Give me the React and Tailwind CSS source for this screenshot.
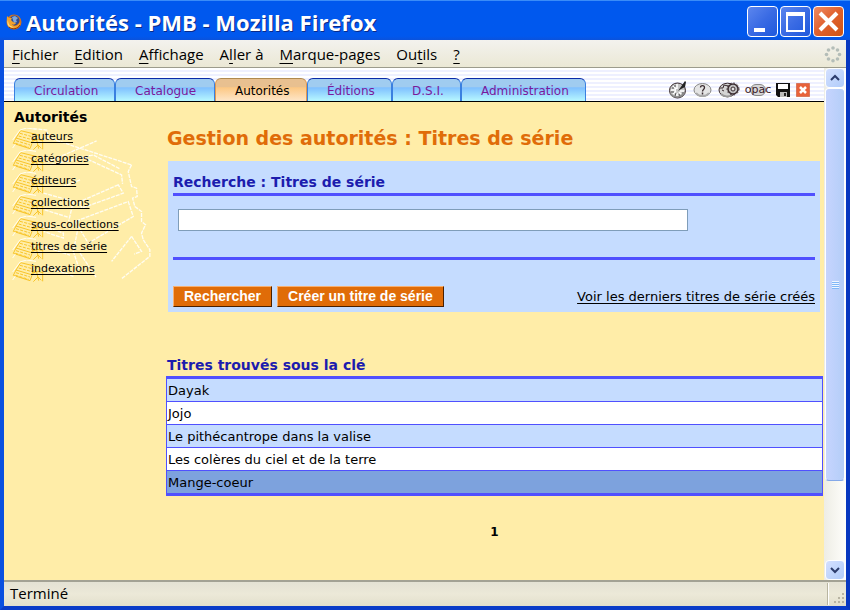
import React from "react";

const VERDANA = "font-['DejaVu_Sans',sans-serif]";
const TAHOMA = "font-['Open_Sans',sans-serif]";

const menus = [
  ["", "F", "ichier"],
  ["", "E", "dition"],
  ["", "A", "ffichage"],
  ["A", "l", "ler à"],
  ["", "M", "arque-pages"],
  ["Ou", "t", "ils"],
  ["", "?", ""],
];

const tabs = [
  { label: "Circulation", width: "w-[101px]" },
  { label: "Catalogue", width: "w-[100px]" },
  { label: "Autorités", width: "w-[92px]", active: true },
  { label: "Éditions", width: "w-[85px]" },
  { label: "D.S.I.", width: "w-[69px]" },
  { label: "Administration", width: "w-[125px]" },
];

const links = ["auteurs", "catégories", "éditeurs", "collections", "sous-collections", "titres de série", "indexations"];

const results = [
  { title: "Dayak", bg: "bg-[#c5dcff]" },
  { title: "Jojo", bg: "bg-white" },
  { title: "Le pithécantrope dans la valise", bg: "bg-[#c5dcff]" },
  { title: "Les colères du ciel et de la terre", bg: "bg-white" },
  { title: "Mange-coeur", bg: "bg-[#7da2dd]" },
];

function FirefoxLogo() {
  return (
    <svg width="16" height="16" viewBox="0 0 16 16" aria-hidden="true">
      <circle cx="8" cy="8" r="7.5" fill="#d8741a" />
      <circle cx="8.5" cy="6.5" r="5" fill="#2c4a94" />
      <path d="M6 3l3-1 3 2-2 2 1 2-3 1-1-3z" fill="#7fa8dc" />
      <path d="M1 2l2 2 3 0-1 2 2 2 3 1c-1 2-3 2-4 1 1 3 6 3 8-2 1 4-3 7-6 7C3 15 0 12 1 2z" fill="#f2a22c" />
      <path d="M2 6c0 5 3 7 6 7-4 2-8-2-6-7z" fill="#fbe08a" />
      <path d="M3 13c3 3 9 2 11-2" stroke="#8a3208" fill="none" />
    </svg>
  );
}

function WindowButton({ label, close, children }) {
  return (
    <button
      type="button"
      aria-label={label}
      className={`size-[31px] rounded border border-white flex items-center justify-center ${
        close
          ? "bg-linear-to-br from-[#ee8a62] via-[#e0602c] to-[#cf5410]"
          : "bg-linear-to-br from-[#5c86ee] via-[#3a6be4] to-[#1d58dc]"
      }`}
    >
      <svg width="27" height="27" viewBox="0 0 27 27" fill="none" stroke="#fff" aria-hidden="true">
        {children}
      </svg>
    </button>
  );
}

function TitleBar() {
  return (
    <header className="h-10 shrink-0 flex items-center gap-1 px-1.5 pt-0.5 bg-linear-to-b from-[#0058ee] from-0% via-[#0058ee] via-90% to-[#0a52dc] border-t border-[#3a8cf8]">
      <FirefoxLogo />
      <h1 className="grow text-[22px] leading-7 font-bold text-white whitespace-nowrap font-['Open_Sans',sans-serif] [text-shadow:1px_1px_0_#0a2a88]">
        Autorités - PMB - Mozilla Firefox
      </h1>
      <div className="flex gap-0.5">
        <WindowButton label="Réduire">
          <path d="M5 22h11" strokeWidth="4" />
        </WindowButton>
        <WindowButton label="Agrandir">
          <path d="M5 6v17h17V6" strokeWidth="2" />
          <path d="M4 6h19" strokeWidth="4" />
        </WindowButton>
        <WindowButton label="Fermer" close>
          <path d="M5 5l17 17M22 5L5 22" strokeWidth="4" />
        </WindowButton>
      </div>
    </header>
  );
}

function MenuBar() {
  return (
    <nav className={`h-7 shrink-0 flex items-center pl-2 pr-1 bg-linear-to-b from-[#f3f2ee] to-[#ebe8d5] border-b border-[#9c9b8c] ${TAHOMA}`}>
      <div className="grow flex gap-4 text-[15px] leading-6 text-black">
        {menus.map(([before, key, after]) => (
          <button type="button" key={before + key + after} className="whitespace-pre">
            {before}
            <span className="underline underline-offset-3">{key}</span>
            {after}
          </button>
        ))}
      </div>
      <svg width="18" height="18" viewBox="0 0 18 18" fill="#b4bdb8" aria-hidden="true">
        <circle cx="9" cy="3" r="1.800" />
        <circle cx="13.500" cy="5" r="1.800" />
        <circle cx="15.500" cy="9.500" r="1.800" />
        <circle cx="13.500" cy="14" r="1.800" />
        <circle cx="9" cy="15.800" r="1.800" />
        <circle cx="4.500" cy="14" r="1.800" />
        <circle cx="2.500" cy="9.500" r="1.800" />
        <circle cx="4.500" cy="5" r="1.800" />
      </svg>
    </nav>
  );
}

function ToolIcon({ label, width, children }) {
  return (
    <button type="button" aria-label={label}>
      <svg width={width} height="18" viewBox={`0 0 ${width} 18`} fill="none" stroke="#3a2c30" aria-hidden="true">
        {children}
      </svg>
    </button>
  );
}

function Toolbar() {
  return (
    <div className="flex items-center gap-1.5 pr-3.5 pb-0.5">
      <ToolIcon label="Raccourcis" width={19}>
        <ellipse cx="9.500" cy="9.500" rx="8" ry="7.500" fill="#c4c4c4" />
        <path d="M2.500 13c3 4 10 4 13 0" stroke="#888" strokeWidth="1.500" />
        <path d="M9 3v5M3 9h5M12 10h4M9 12v3M5 5l3 3M5 13l3-3M13 13l-2-2" stroke="#fff" strokeWidth="1.500" />
        <path d="M7 4v2M4 7h2M3 11h3M7 15l1-3M12 15l-1-2M14 12h2" stroke="#555" />
        <path d="M10 10l7-10 1 1-1 5-4 2z" fill="#222" stroke="none" />
      </ToolIcon>
      <ToolIcon label="Aide" width={19}>
        <ellipse cx="9.500" cy="9" rx="8.500" ry="6.500" fill="#e4e4e4" stroke="#888" />
        <path d="M3 12c3 4 10 4 13 0" stroke="#aaa" strokeWidth="2" />
        <path d="M7.500 6.500c0-2.500 4-2.500 4 0 0 2-2 2-2 4" strokeWidth="1.300" />
        <path d="M9.500 11.500v2" strokeWidth="1.500" />
      </ToolIcon>
      <ToolIcon label="Préférences" width={22}>
        <ellipse cx="9.500" cy="9" rx="8.500" ry="6.800" fill="#d4d4d4" />
        <path d="M3 13c3 3 8 3 11 1" stroke="#999" strokeWidth="2" />
        <path d="M2 7h3l1-3 4 1M4 9l2 1" />
        <circle cx="15" cy="8" r="5" fill="#c0c0c0" strokeWidth="1.500" />
        <circle cx="15" cy="8" r="6" stroke="#3a2c30" strokeDasharray="1.500 2" />
        <circle cx="15" cy="8" r="2" fill="#e4e4e4" />
      </ToolIcon>
      <button type="button" className="relative w-6 h-4 flex items-center justify-center text-[11px] leading-4 text-[#3a1c28] font-['DejaVu_Sans',sans-serif]">
        <span className="absolute inset-x-1 inset-y-0.5 rounded-full border border-[#888] bg-[#d6d6d6]" />
        <span className="relative">opac</span>
      </button>
      <ToolIcon label="Sauvegarde" width={14}>
        <path d="M0 2h14v14H2l-2-2z" fill="#111" stroke="none" />
        <path d="M2 3h10v5H2z" fill="#fff" stroke="none" />
        <path d="M4 11h7v5H4z" fill="#bbb" stroke="none" />
        <path d="M8 12h2v3H8z" fill="#222" stroke="none" />
      </ToolIcon>
      <ToolIcon label="Quitter" width={14}>
        <path d="M.5 2.500h13v13H.5z" fill="#e8623a" stroke="#c0401c" strokeDasharray="1 1" />
        <path d="M4 6l6 6M10 6l-6 6" stroke="#fff" strokeWidth="2.500" />
      </ToolIcon>
    </div>
  );
}

function TabBar() {
  return (
    <div className="h-[34px] shrink-0 flex items-end pl-2.5 border-b border-black bg-[repeating-linear-gradient(to_bottom,#fff_0px,#fff_2px,#eef0ff_2px,#eef0ff_4px)]">
      <nav className={`grow flex text-xs ${VERDANA}`}>
        {tabs.map((tab) => (
          <a
            key={tab.label}
            href="#"
            className={`${tab.width} h-[23px] pl-[19px] pt-1 leading-4 rounded-t-md border-t border-x whitespace-nowrap ${
              tab.active
                ? "text-black border-t-[#b08a50] border-x-[#e09a50] bg-linear-to-b from-[#e8c090] from-35% via-[#fcc884] via-40% to-[#fde6c8]"
                : "text-[#7a1a9a] border-t-[#0c2ca8] border-x-[#3a80e0] bg-linear-to-b from-[#a0ccf0] from-35% via-[#80c0ff] via-40% to-[#b8f8ff]"
            }`}
          >
            {tab.label}
          </a>
        ))}
      </nav>
      <Toolbar />
    </div>
  );
}

function BookPile() {
  return (
    <svg width="32" height="22" viewBox="36 82 96 66" fill="none" strokeWidth="3" aria-hidden="true">
      <path d="M62 90l58 14M62 90l-14 22 46 14 8-14M48 112l-8 16 50 16 6-16M112 104l-12 16" stroke="#f8c428" />
      <path d="M60 98l40 11M56 106l40 11M48 120l42 13M46 128l40 12" stroke="#f8c428" strokeDasharray="9 4" />
      <path d="M98 122l14-6 18 4M110 118l6 26M128 122v24M100 147l14-14 10 10" stroke="#f8c428" />
      <path d="M38 118l22-30 20-6 28 4M38 142l8-12" stroke="#fffdf2" />
    </svg>
  );
}

function Sidebar() {
  return (
    <aside className={`w-[162px] shrink-0 pl-2.5 pt-[7px] text-black ${VERDANA}`}>
      <h2 className="text-sm leading-[17px] font-bold">Autorités</h2>
      <div className="relative">
        <svg
          className="absolute -left-0.5 top-0"
          width="140"
          height="153"
          viewBox="36 78 420 460"
          fill="none"
          stroke="#fffdf2"
          strokeWidth="4"
          strokeDasharray="12 3"
          aria-hidden="true"
        >
          <path d="M100 86l40 4 4 20M140 112l255 83M250 172l115 53 3 27M145 185l145-62M150 195l130-30 80 42" />
          <path d="M395 195l-10 20 10 45 15 5 2 25-14 5 7 25 20 15v30l12 10-12 25 5 20 20 30v20l-85 67" />
          <path d="M355 255l-115 50 5 20 125-45zM240 240l-50 20M385 305l15 45-135 80-40-65z" />
          <path d="M395 410l30 45-22 8M395 410l-60 75M240 460l50 75M232 395l-12 60 20 60M130 380l60 20v15l-60-20" />
          <path d="M130 280l90 24-14 60M134 330l70 22M130 440l80 26M140 500l80 30" />
        </svg>
        <ul>
          {links.map((link) => (
            <li key={link} className="relative h-[22px]">
              <span className="absolute -left-0.5 top-0.5">
                <BookPile />
              </span>
              <a href="#" className="relative block pl-[17px] text-[11px] leading-[22px] underline underline-offset-2">
                {link}
              </a>
            </li>
          ))}
        </ul>
      </div>
    </aside>
  );
}

const ACTION =
  "h-[21px] px-2.5 bg-[#e06c08] border border-t-[#f8b070] border-l-[#f8b070] border-r-[#4a2000] border-b-[#4a2000] text-sm leading-[19px] font-bold text-white font-['Liberation_Sans',sans-serif]";

function SearchForm() {
  return (
    <form className="mr-[3px] ml-0.5 px-[5px] pt-2.5 pb-[5px] bg-[#c5dcff]" onSubmit={(e) => e.preventDefault()}>
      <label htmlFor="titre" className="block h-[25px] text-sm leading-[22px] font-bold text-[#1c1cae] border-b-3 border-[#5050ff]">
        Recherche : Titres de série
      </label>
      <div className="h-16 pl-[5px] pt-[13px] border-b-3 border-[#5050ff]">
        <input id="titre" type="text" className="block w-4/5 h-[22px] px-1 text-[13px] bg-white border border-[#7f9db9] outline-none" />
      </div>
      <div className="mt-[26px] flex items-center gap-[5px]">
        <button type="submit" className={ACTION}>
          Rechercher
        </button>
        <button type="button" className={ACTION}>
          Créer un titre de série
        </button>
        <a href="#" className="ml-auto text-[13px] leading-5 text-black underline underline-offset-2">
          Voir les derniers titres de série créés
        </a>
      </div>
    </form>
  );
}

function Results() {
  return (
    <section className="mt-[42px]">
      <h3 className="text-sm leading-[22px] font-bold text-[#1c1cae] pl-px">Titres trouvés sous la clé</h3>
      <table className="w-full border-separate border-spacing-0 border-x border-y-3 border-[#5050ff] text-[13px] leading-5 text-black">
        <tbody>
          {results.map((row, i) => (
            <tr key={row.title} className={row.bg}>
              <td className={`px-px pt-0.5 pb-0 ${i < results.length - 1 ? "border-b border-[#5050ff]" : ""}`}>{row.title}</td>
            </tr>
          ))}
        </tbody>
      </table>
      <p className="mt-[26px] text-center text-xs leading-5 font-bold">1</p>
    </section>
  );
}

function ScrollButton({ label, d }) {
  return (
    <button type="button" aria-label={label} className="h-5 shrink-0 flex items-center justify-center rounded-sm border border-white bg-linear-to-br from-[#d4e0ff] to-[#b0ccfa]">
      <svg width="10" height="8" viewBox="0 0 10 8" fill="none" stroke="#2c3c6c" strokeWidth="2" aria-hidden="true">
        <path d={d} />
      </svg>
    </button>
  );
}

function Scrollbar() {
  return (
    <div className="w-[22px] shrink-0 flex flex-col px-px bg-linear-to-r from-[#eeede5] to-[#fefefb]">
      <ScrollButton label="Défiler vers le haut" d="M1 6l4-4 4 4" />
      <div className="grow flex flex-col">
        <div className="h-5/6 flex flex-col items-center justify-center rounded-sm border border-white border-b-[#84a8e8] bg-linear-to-r from-[#c6d4fe] to-[#b4cef8]">
          <span className="w-[7px] h-2 bg-[repeating-linear-gradient(to_bottom,#f0f6ff_0px,#f0f6ff_1px,#80b8f8_1px,#80b8f8_2px)]" />
        </div>
      </div>
      <ScrollButton label="Défiler vers le bas" d="M1 2l4 4 4-4" />
    </div>
  );
}

function StatusBar() {
  return (
    <footer className={`h-[26px] shrink-0 flex bg-linear-to-b from-[#e4e2d4] via-[#ece9d8] to-[#e2dfcc] border-t-2 border-[#a3a294] ${TAHOMA}`}>
      <p className="grow pl-1.5 text-[15px] leading-[22px] text-black">Terminé</p>
      <span className="w-0.5 my-px bg-white border-l border-[#b8b5a0]" />
      <svg className="self-end" width="17" height="14" viewBox="0 0 17 14" fill="#b8b4a2" aria-hidden="true">
        <path d="M13 1h2v2h-2zM9 5h2v2H9zM13 5h2v2h-2zM5 9h2v2H5zM9 9h2v2H9zM13 9h2v2h-2z" />
      </svg>
    </footer>
  );
}

export default function App() {
  return (
    <div className="min-h-screen flex flex-col bg-[#0054e8]">
      <TitleBar />
      <div className="grow flex flex-col border-x-4 border-b-4 border-l-[#0a50e0] border-r-[#0838c0] border-b-[#0a3cc8]">
        <MenuBar />
        <div className="grow flex bg-[#ffeda8]">
          <div className="grow min-w-0 flex flex-col">
            <TabBar />
            <div className="grow flex">
              <Sidebar />
              <main className={`grow min-w-0 pr-px pt-[23px] ${VERDANA}`}>
                <h2 className="mb-2.5 pl-px text-[19px] leading-[26px] font-bold text-[#e06c08]">
                  Gestion des autorités : Titres de série
                </h2>
                <SearchForm />
                <Results />
              </main>
            </div>
          </div>
          <Scrollbar />
        </div>
        <StatusBar />
      </div>
    </div>
  );
}
